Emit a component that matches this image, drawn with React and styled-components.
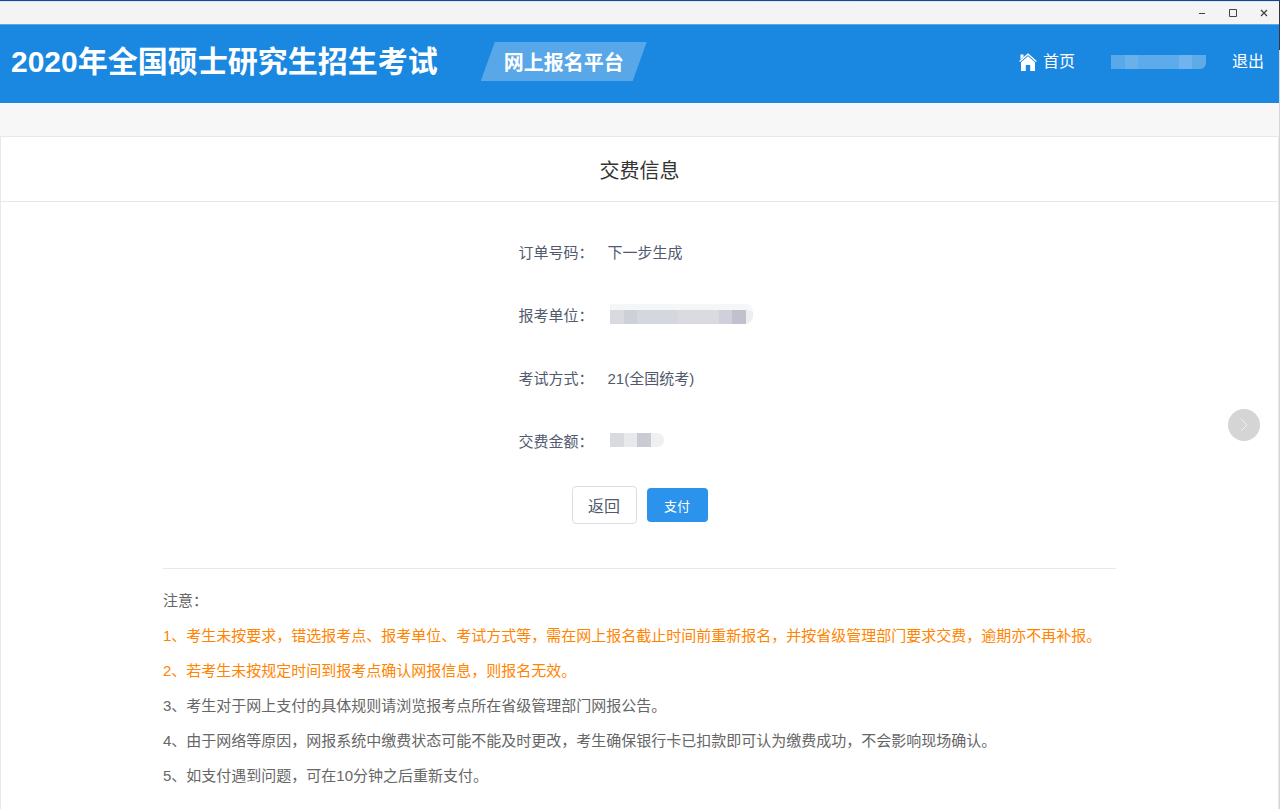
import * as React from 'react';
import styled, {createGlobalStyle, ThemeProvider} from 'styled-components';

const theme = {
  colors: {
    blue: '#1a87e0',
    button: '#2b93ec',
    text: '#515a6e',
    note: '#666666',
    warning: '#ff8400',
    line: '#e8e8e8',
    page: '#f7f7f7',
  },
  font: '"Liberation Sans", "Noto Sans CJK SC", sans-serif',
};

const GlobalStyle = createGlobalStyle`
  * {
    box-sizing: border-box;
  }
  html, body, #root {
    height: 100%;
    margin: 0;
  }
  button {
    font-family: inherit;
    cursor: pointer;
  }
`;

const Desktop = styled.div`
  min-height: 100%;
  display: flex;
  padding: 1px 1px 0 0;
  font-family: ${props => props.theme.font};
  color: ${props => props.theme.colors.text};
  background: linear-gradient(90deg, #0a4da2, #0a4a9a) top / 100% 1px no-repeat,
    linear-gradient(#33363c 50px, #d5d6d8 50px) #d5d6d8;
`;

const Window = styled.div`
  flex: 1;
  min-width: 0;
  display: flex;
  flex-direction: column;
  background-color: ${props => props.theme.colors.page};
`;

const TitleBar = styled.div`
  height: 23px;
  flex-shrink: 0;
  display: flex;
  justify-content: flex-end;
  align-items: center;
  background-color: #f4f4f4;
  border-top: 1px solid #dfe6f0;
`;

const WindowButton = styled.button`
  width: 31px;
  height: 22px;
  padding: 0;
  border: 0;
  background: none;
  color: #444;
  display: flex;
  align-items: center;
  justify-content: center;
`;

const Header = styled.header`
  height: 79px;
  flex-shrink: 0;
  display: flex;
  align-items: center;
  padding: 0 15px 5px 11px;
  border-top: 1px solid #5aa9ea;
  background-color: ${props => props.theme.colors.blue};
  color: #fff;
`;

const SiteName = styled.h1`
  margin: 0;
  font-size: 30px;
  line-height: 40px;
  font-weight: bold;
  white-space: nowrap;
`;

const Platform = styled.span`
  width: 166px;
  height: 39px;
  margin-left: 43px;
  display: flex;
  align-items: center;
  justify-content: center;
  font-size: 20px;
  font-weight: bold;
  white-space: nowrap;
  background-color: #57a7e9;
  clip-path: polygon(14px 0, 100% 0, calc(100% - 14px) 100%, 0 100%);
`;

const Nav = styled.nav`
  margin-left: auto;
  display: flex;
  align-items: center;
`;

const NavLink = styled.a`
  display: flex;
  align-items: center;
  gap: 6px;
  color: #fff;
  font-size: 16px;
  line-height: 24px;
  text-decoration: none;
  white-space: nowrap;
`;

const UserMask = styled.span`
  display: flex;
  height: 14px;
  margin: 0 26px 0 36px;
  border-radius: 0 0 6px 0;
  overflow: hidden;
`;

const Card = styled.main`
  flex: 1;
  margin-top: 33px;
  border: 1px solid ${props => props.theme.colors.line};
  border-width: 1px 1px 0;
  background-color: #fff;
`;

const CardTitle = styled.h2`
  margin: 0;
  padding: 20px 0 15px;
  font-size: 20px;
  line-height: 29px;
  font-weight: normal;
  text-align: center;
  color: #333;
  border-bottom: 1px solid ${props => props.theme.colors.line};
`;

const Details = styled.dl`
  width: 242px;
  margin: 33px auto 30px;
  display: flex;
  flex-direction: column;
  gap: 31px;
`;

const DetailRow = styled.div`
  display: flex;
  align-items: center;
  gap: 14px;
  height: 32px;
  font-size: 15px;
  white-space: nowrap;
`;

const Label = styled.dt`
  width: 75px;
`;

const Value = styled.dd`
  margin: 0;
`;

const Mask = styled.span`
  display: flex;
  margin-left: 2px;
  border-top: ${props => props.$faded ? 6 : 0}px solid #f5f6f7;
  border-radius: 0 8px 8px 0;
  overflow: hidden;
`;

const Cell = styled.span`
  width: ${props => props.$width}px;
  height: 14px;
  background-color: ${props => props.$color};
`;

const Actions = styled.div`
  display: flex;
  justify-content: center;
  align-items: center;
  gap: 10px;
`;

const BackButton = styled.button`
  width: 65px;
  height: 38px;
  padding: 0;
  border: 1px solid #dcdee2;
  border-radius: 4px;
  background-color: #fff;
  color: ${props => props.theme.colors.text};
  font-size: 16px;
`;

const PayButton = styled.button`
  width: 61px;
  height: 34px;
  padding: 0;
  border: 0;
  border-radius: 4px;
  background-color: ${props => props.theme.colors.button};
  color: #fff;
  font-size: 13px;
`;

const Notes = styled.section`
  max-width: 953px;
  margin: 44px auto 0;
  padding: 14px 0;
  border-top: 1px solid ${props => props.theme.colors.line};
  color: ${props => props.theme.colors.note};
  font-size: 15px;
  line-height: 35px;
`;

const Note = styled.p`
  margin: 0;
  color: ${props => props.$warning ? props.theme.colors.warning : 'inherit'};
`;

const NextButton = styled.button`
  position: fixed;
  right: 20px;
  bottom: 368px;
  width: 32px;
  height: 32px;
  padding: 0;
  border: 0;
  border-radius: 50%;
  background-color: #d5d5d5;
  color: #f0f0f0;
  display: flex;
  align-items: center;
  justify-content: center;
`;

const userCells = [
  [14, '#59a8ea'],
  [13, '#6ab1ec'],
  [41, '#5dabea'],
  [13, '#6fb4ee'],
  [14, '#5eabea'],
];

const unitCells = [
  [14, '#d9d9e0'],
  [13, '#ced0d8'],
  [41, '#d4d7de'],
  [41, '#dadbe1'],
  [13, '#cfd0d9'],
  [14, '#bfc2ce'],
  [7, '#eceef0'],
];

const amountCells = [
  [14, '#d9d9e0'],
  [13, '#e8e9ec'],
  [14, '#c9cbd5'],
  [13, '#eff0f1'],
];

const notes = [
  {text: '1、考生未按要求，错选报考点、报考单位、考试方式等，需在网上报名截止时间前重新报名，并按省级管理部门要求交费，逾期亦不再补报。', warning: true},
  {text: '2、若考生未按规定时间到报考点确认网报信息，则报名无效。', warning: true},
  {text: '3、考生对于网上支付的具体规则请浏览报考点所在省级管理部门网报公告。'},
  {text: '4、由于网络等原因，网报系统中缴费状态可能不能及时更改，考生确保银行卡已扣款即可认为缴费成功，不会影响现场确认。'},
  {text: '5、如支付遇到问题，可在10分钟之后重新支付。'},
];

const Cells = ({cells}) => cells.map(([width, color], i) => (
  <Cell key={i} $width={width} $color={color}/>
));

const HomeIcon = () => (
  <svg width="18" height="18" viewBox="0 0 18 18" fill="#fff" aria-hidden="true">
    <path d="M1.5 1.5h3v2.6l-3 2.5z"/>
    <path d="M.6 8.4L9 1.2l8.4 7.2" fill="none" stroke="#fff" strokeWidth="1.3"/>
    <path d="M9 3.2l7 6.1V18h-4.800v-6H6.800v6H2V9.300z"/>
  </svg>
);

const App = () => (
  <ThemeProvider theme={theme}>
    <GlobalStyle/>
    <Desktop>
      <Window>
        <TitleBar>
          <WindowButton aria-label="最小化">
            <svg width="8" height="8" stroke="currentColor"><path d="M1 4.500h6"/></svg>
          </WindowButton>
          <WindowButton aria-label="最大化">
            <svg width="8" height="8" stroke="currentColor" fill="none"><path d="M.5 .5h7v7h-7z"/></svg>
          </WindowButton>
          <WindowButton aria-label="关闭">
            <svg width="8" height="8" stroke="currentColor" strokeWidth="1.3"><path d="M1 1l6 6M7 1L1 7"/></svg>
          </WindowButton>
        </TitleBar>
        <Header>
          <SiteName>2020年全国硕士研究生招生考试</SiteName>
          <Platform>网上报名平台</Platform>
          <Nav>
            <NavLink href="#home"><HomeIcon/>首页</NavLink>
            <UserMask><Cells cells={userCells}/></UserMask>
            <NavLink href="#logout">退出</NavLink>
          </Nav>
        </Header>
        <Card>
          <CardTitle>交费信息</CardTitle>
          <Details>
            <DetailRow>
              <Label>订单号码：</Label>
              <Value>下一步生成</Value>
            </DetailRow>
            <DetailRow>
              <Label>报考单位：</Label>
              <Value><Mask $faded><Cells cells={unitCells}/></Mask></Value>
            </DetailRow>
            <DetailRow>
              <Label>考试方式：</Label>
              <Value>21(全国统考)</Value>
            </DetailRow>
            <DetailRow>
              <Label>交费金额：</Label>
              <Value><Mask><Cells cells={amountCells}/></Mask></Value>
            </DetailRow>
          </Details>
          <Actions>
            <BackButton>返回</BackButton>
            <PayButton>支付</PayButton>
          </Actions>
          <Notes>
            <Note>注意：</Note>
            {notes.map(note => (
              <Note key={note.text} $warning={note.warning}>{note.text}</Note>
            ))}
          </Notes>
        </Card>
      </Window>
      <NextButton aria-label="下一页">
        <svg width="10" height="14" fill="none" stroke="currentColor"><path d="M2 1l6 6-6 6"/></svg>
      </NextButton>
    </Desktop>
  </ThemeProvider>
);

export default App;
